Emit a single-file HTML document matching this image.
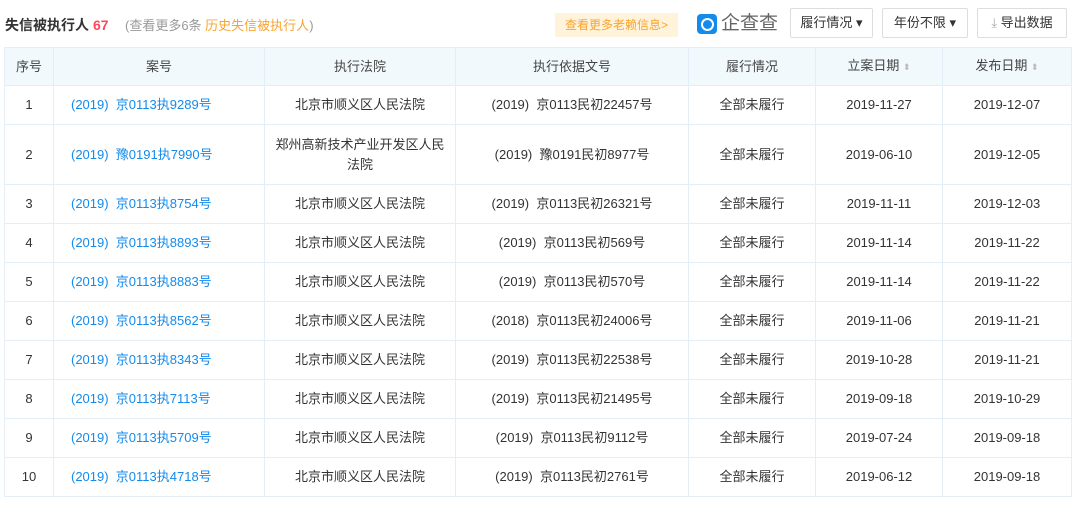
<!DOCTYPE html><html><head><meta charset="utf-8"><style>
body{margin:0;width:1080px;height:512px;background:#fff;font-family:"Liberation Sans","Noto Sans CJK SC",sans-serif;color:#333;position:relative;overflow:hidden}
.t{position:absolute;left:5px;top:16px;font-size:14px;line-height:18px;font-weight:bold;color:#333}
.t b{color:#fd485e;margin-left:4px}
.sub{position:absolute;left:125px;top:17px;font-size:13px;line-height:18px;color:#999}
.sub span{color:#f9a42d}
.more{position:absolute;left:555px;top:13px;width:123px;height:24px;background:#fff3dc;color:#f9a42d;font-size:12px;line-height:24px;text-align:center}
.logo{position:absolute;left:697px;top:12px;height:24px;display:flex;align-items:center;font-size:19px;color:#666;line-height:24px}
.logo i{display:inline-block;width:20px;height:20px;background:#128bed;border-radius:4px;margin-right:4px;position:relative}
.logo i:after{content:"";position:absolute;left:4px;top:4px;width:9px;height:9px;border:2px solid #fff;border-radius:50%}
.btn{position:absolute;top:8px;height:30px;border:1px solid #ddd;border-radius:2px;font-size:13px;line-height:28px;text-align:center;color:#333;box-sizing:border-box}
table{position:absolute;left:4px;top:47px;border-collapse:collapse;font-size:13px;line-height:20px;table-layout:fixed}
td,th{border:1px solid #e4eef6;text-align:center;padding:0 10px;font-weight:normal;vertical-align:middle}
th{background:#f2f9fc;height:37px;color:#444;font-weight:400}
td{height:38px}
td.a{color:#128bed;text-align:left;padding-left:17px}
.s{color:#bbb;font-size:9px}
</style></head><body>
<div class="t">失信被执行人<b>67</b></div>
<div class="sub">(查看更多6条 <span>历史失信被执行人</span>)</div>
<div class="more">查看更多老赖信息&gt;</div>
<div class="logo"><i></i>企查查</div>
<div class="btn" style="left:790px;width:83px">履行情况 ▾</div>
<div class="btn" style="left:882px;width:86px">年份不限 ▾</div>
<div class="btn" style="left:977px;width:90px"><span style="color:#aaa">⤓</span> 导出数据</div>
<table>
<colgroup><col style="width:49px"><col style="width:211px"><col style="width:191px"><col style="width:233px"><col style="width:127px"><col style="width:127px"><col style="width:129px"></colgroup>
<tr><th>序号</th><th>案号</th><th>执行法院</th><th>执行依据文号</th><th>履行情况</th><th>立案日期 <span class="s">⬍</span></th><th>发布日期 <span class="s">⬍</span></th></tr>
<tr><td>1</td><td class="a">(2019)&nbsp; 京0113执9289号</td><td>北京市顺义区人民法院</td><td>(2019)&nbsp; 京0113民初22457号</td><td>全部未履行</td><td>2019-11-27</td><td>2019-12-07</td></tr>
<tr><td style="height:59px">2</td><td class="a">(2019)&nbsp; 豫0191执7990号</td><td>郑州高新技术产业开发区人民法院</td><td>(2019)&nbsp; 豫0191民初8977号</td><td>全部未履行</td><td>2019-06-10</td><td>2019-12-05</td></tr>
<tr><td>3</td><td class="a">(2019)&nbsp; 京0113执8754号</td><td>北京市顺义区人民法院</td><td>(2019)&nbsp; 京0113民初26321号</td><td>全部未履行</td><td>2019-11-11</td><td>2019-12-03</td></tr>
<tr><td>4</td><td class="a">(2019)&nbsp; 京0113执8893号</td><td>北京市顺义区人民法院</td><td>(2019)&nbsp; 京0113民初569号</td><td>全部未履行</td><td>2019-11-14</td><td>2019-11-22</td></tr>
<tr><td>5</td><td class="a">(2019)&nbsp; 京0113执8883号</td><td>北京市顺义区人民法院</td><td>(2019)&nbsp; 京0113民初570号</td><td>全部未履行</td><td>2019-11-14</td><td>2019-11-22</td></tr>
<tr><td>6</td><td class="a">(2019)&nbsp; 京0113执8562号</td><td>北京市顺义区人民法院</td><td>(2018)&nbsp; 京0113民初24006号</td><td>全部未履行</td><td>2019-11-06</td><td>2019-11-21</td></tr>
<tr><td>7</td><td class="a">(2019)&nbsp; 京0113执8343号</td><td>北京市顺义区人民法院</td><td>(2019)&nbsp; 京0113民初22538号</td><td>全部未履行</td><td>2019-10-28</td><td>2019-11-21</td></tr>
<tr><td>8</td><td class="a">(2019)&nbsp; 京0113执7113号</td><td>北京市顺义区人民法院</td><td>(2019)&nbsp; 京0113民初21495号</td><td>全部未履行</td><td>2019-09-18</td><td>2019-10-29</td></tr>
<tr><td>9</td><td class="a">(2019)&nbsp; 京0113执5709号</td><td>北京市顺义区人民法院</td><td>(2019)&nbsp; 京0113民初9112号</td><td>全部未履行</td><td>2019-07-24</td><td>2019-09-18</td></tr>
<tr><td>10</td><td class="a">(2019)&nbsp; 京0113执4718号</td><td>北京市顺义区人民法院</td><td>(2019)&nbsp; 京0113民初2761号</td><td>全部未履行</td><td>2019-06-12</td><td>2019-09-18</td></tr>
</table>
</body></html>
